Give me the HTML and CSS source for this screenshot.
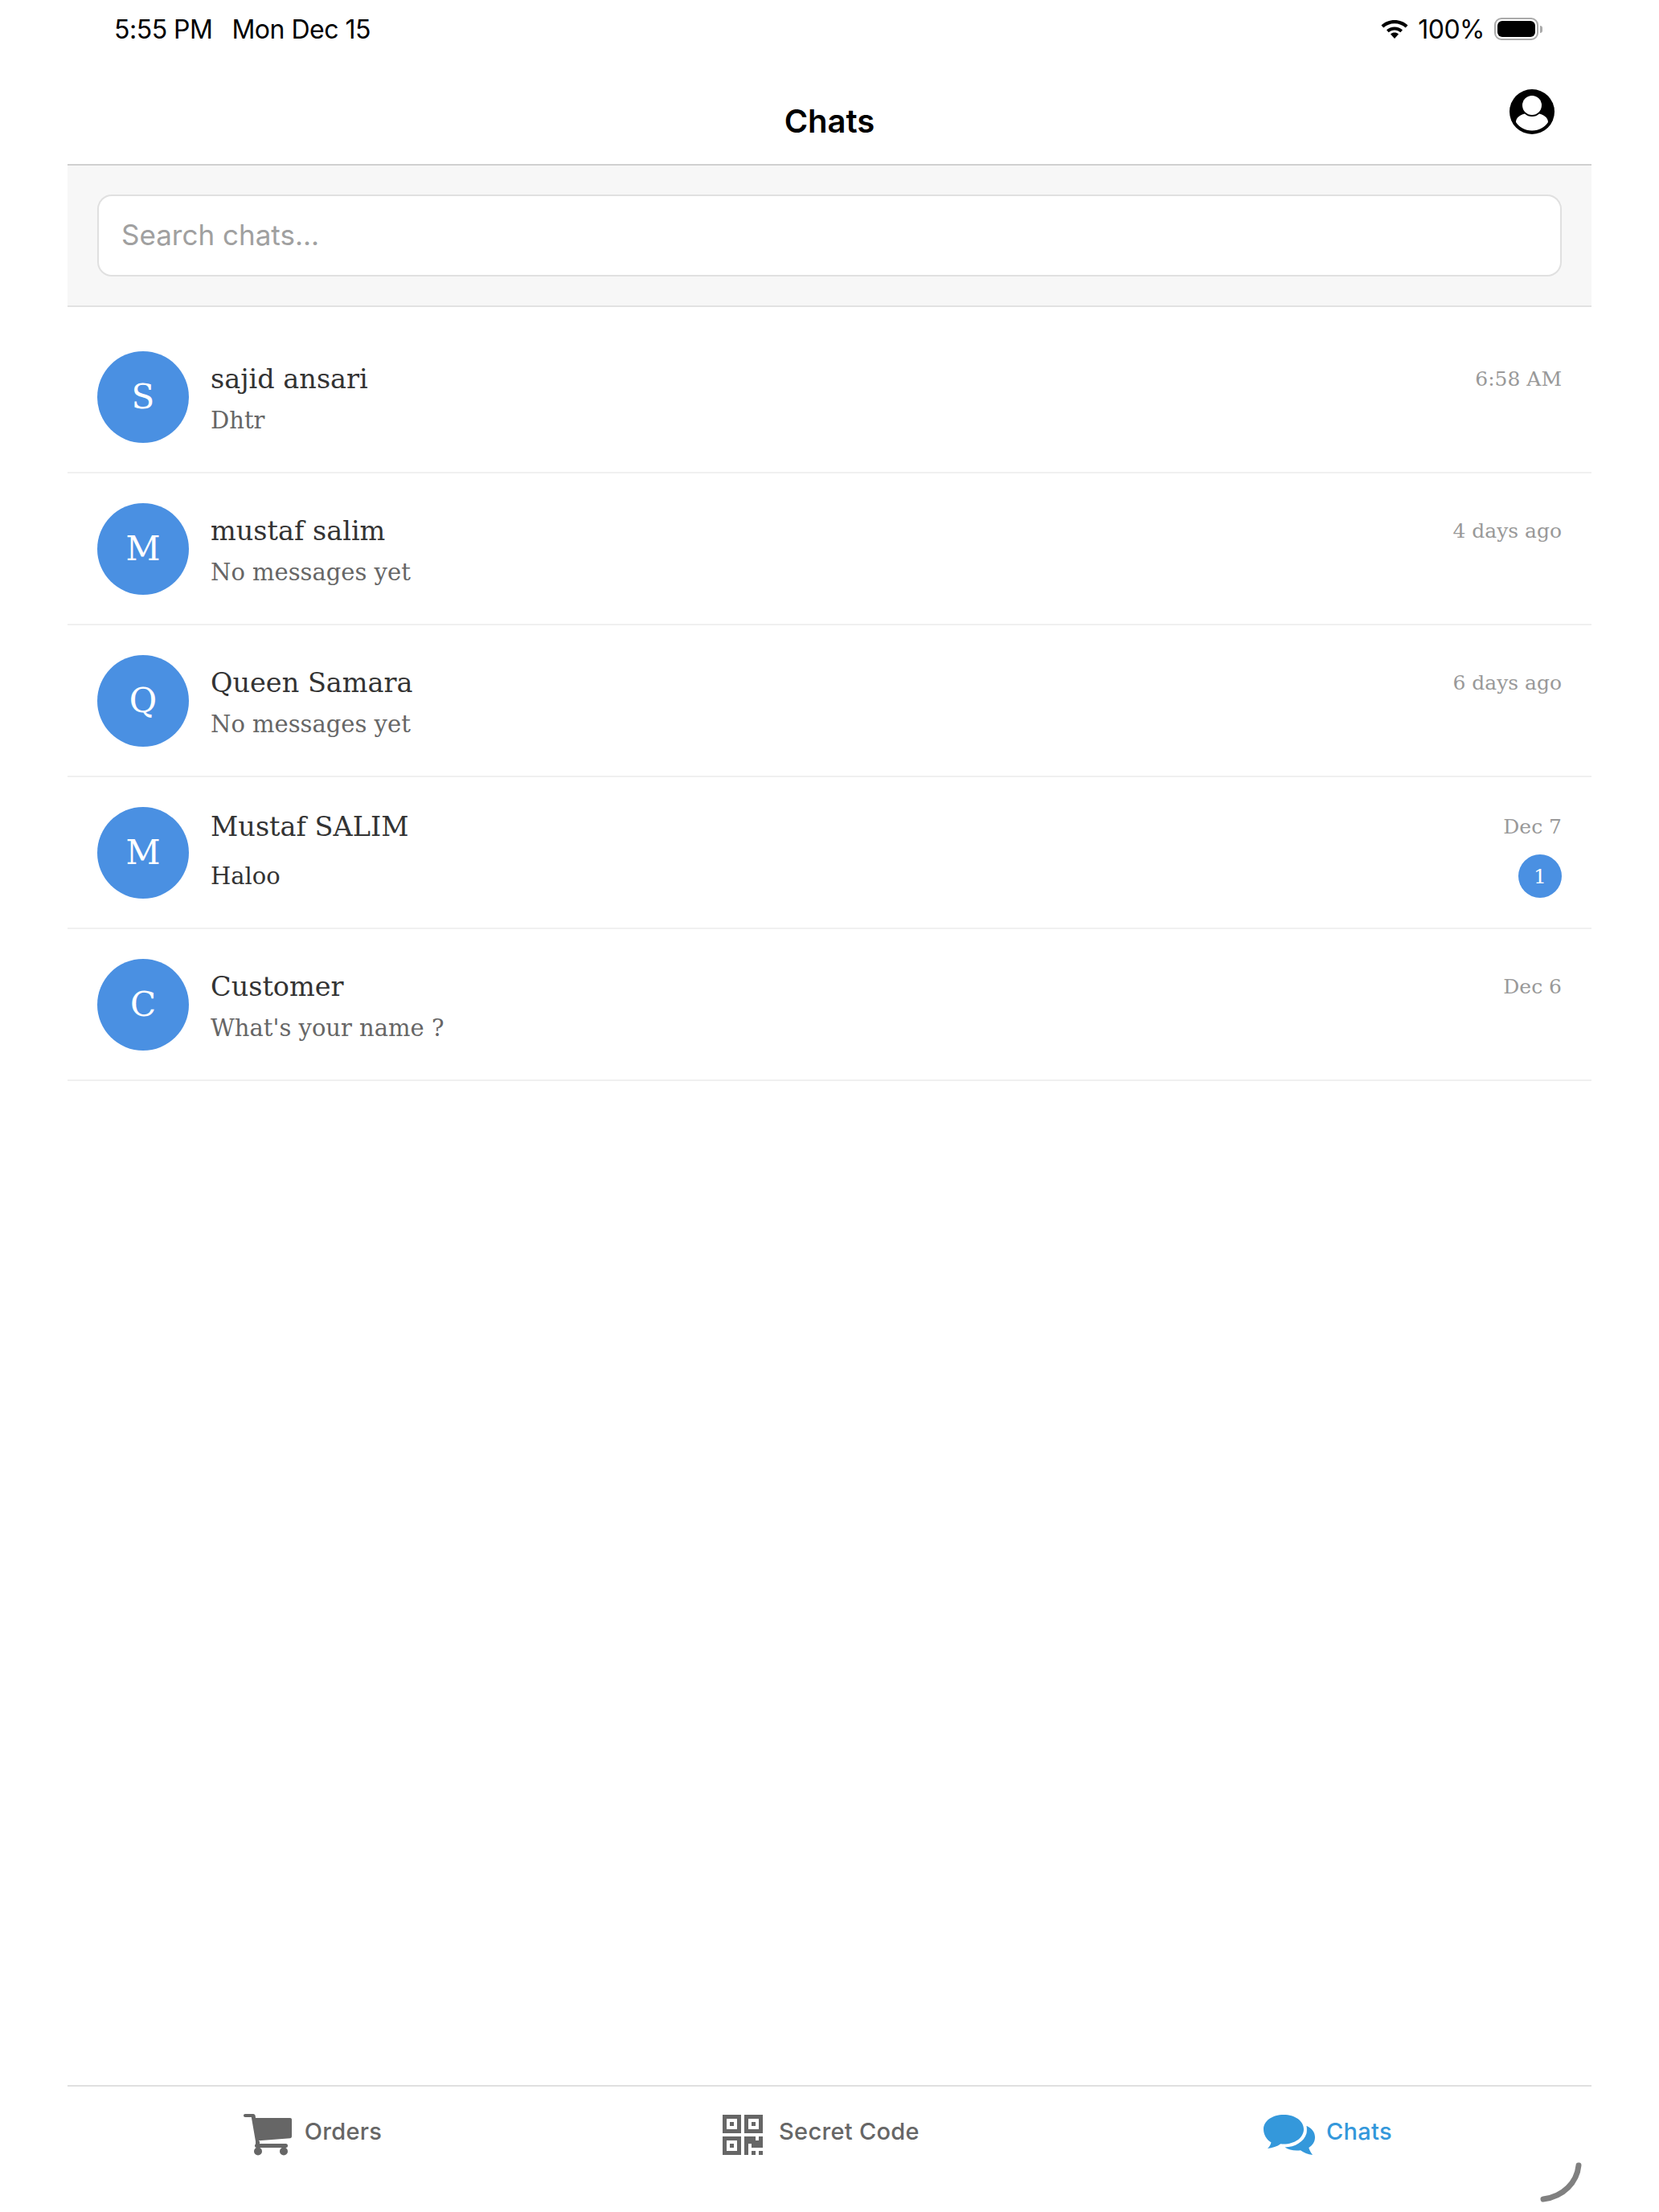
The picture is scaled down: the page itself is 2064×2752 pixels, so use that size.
FILE: index.html
```html
<!DOCTYPE html>
<html lang="en">
<head>
    <meta charset="UTF-8">
    <meta name="viewport" content="width=device-width, initial-scale=1.0">
    <title>Chats</title>
    <link rel="stylesheet" href="styles.css">
</head>
<body>
    <div class="status-bar">
        <div class="status-left">
            <span>5:55 PM</span>
            <span>Mon Dec 15</span>
        </div>
        <div class="status-right">
            <svg class="wifi" viewBox="0 0 34 24" width="34" height="24">
                <path d="M17 24l-5-5.6c2.8-2.4 7.2-2.4 10 0z" fill="#000"/>
                <path d="M17 9.5c-3.9 0-7.4 1.4-10 3.8l2.6 2.9c2-1.7 4.600-2.800 7.400-2.800s5.400 1.100 7.400 2.800l2.600-2.900c-2.600-2.400-6.100-3.800-10-3.800z" fill="#000"/>
                <path d="M17 1C10.600 1 4.800 3.400.500 7.400l2.800 3.100C6.900 7.200 11.700 5.200 17 5.200s10.100 2 13.700 5.300l2.800-3.100C29.200 3.400 23.400 1 17 1z" fill="#000"/>
            </svg>
            <span>100%</span>
            <div class="battery">
                <div class="battery-body"><div class="battery-fill"></div></div>
                <div class="battery-tip"></div>
            </div>
        </div>
    </div>

    <div class="app">
        <div class="nav-bar">
            <h1 class="nav-title">Chats</h1>
            <svg class="profile" viewBox="0 0 56 56" width="56" height="56">
                <circle cx="28" cy="28" r="28" fill="#000"/>
                <circle cx="28" cy="20" r="12" fill="#fff"/>
                <path d="M8 41c0-6 6-9.500 11-10.500 2.500 2.500 5.500 3.500 9 3.500s6.500-1 9-3.500c5 1 11 4.500 11 10.500-4 6-11 10.500-20 10.500S12 47 8 41z" fill="#fff"/>
            </svg>
        </div>

        <div class="search-bar">
            <input class="search-input" type="text" placeholder="Search chats...">
        </div>

        <div class="chat-list">
            <div class="chat-row">
                <div class="avatar">S</div>
                <div class="chat-body">
                    <div class="chat-top">
                        <span class="chat-name">sajid ansari</span>
                        <span class="chat-time">6:58 AM</span>
                    </div>
                    <div class="chat-bottom">
                        <span class="chat-msg">Dhtr</span>
                    </div>
                </div>
            </div>
            <div class="chat-row">
                <div class="avatar">M</div>
                <div class="chat-body">
                    <div class="chat-top">
                        <span class="chat-name">mustaf salim</span>
                        <span class="chat-time">4 days ago</span>
                    </div>
                    <div class="chat-bottom">
                        <span class="chat-msg">No messages yet</span>
                    </div>
                </div>
            </div>
            <div class="chat-row">
                <div class="avatar">Q</div>
                <div class="chat-body">
                    <div class="chat-top">
                        <span class="chat-name">Queen Samara</span>
                        <span class="chat-time">6 days ago</span>
                    </div>
                    <div class="chat-bottom">
                        <span class="chat-msg">No messages yet</span>
                    </div>
                </div>
            </div>
            <div class="chat-row">
                <div class="avatar">M</div>
                <div class="chat-body">
                    <div class="chat-top">
                        <span class="chat-name">Mustaf SALIM</span>
                        <span class="chat-time">Dec 7</span>
                    </div>
                    <div class="chat-bottom">
                        <span class="chat-msg unread">Haloo</span>
                        <span class="badge">1</span>
                    </div>
                </div>
            </div>
            <div class="chat-row">
                <div class="avatar">C</div>
                <div class="chat-body">
                    <div class="chat-top">
                        <span class="chat-name">Customer</span>
                        <span class="chat-time">Dec 6</span>
                    </div>
                    <div class="chat-bottom">
                        <span class="chat-msg">What's your name ?</span>
                    </div>
                </div>
            </div>
        </div>

        <div class="tab-bar">
            <div class="tab">
                <svg class="icon-cart" viewBox="0 0 60 52" width="60" height="52">
                    <path d="M2 0h10c1.500 0 2.500 1 2.700 2.500L15 5h43c1.200 0 2 .8 2 2v21c0 1.200-.8 2-2 2.200l-39 3 .6 3.800H15.500L9.800 4H2C.8 4 0 3.200 0 2S.8 0 2 0z" fill="#666"/>
                    <rect x="14" y="37" width="41" height="5" rx="2.500" fill="#666"/>
                    <rect x="15" y="34" width="5" height="6" fill="#666"/>
                    <circle cx="18" cy="46.500" r="5" fill="#666"/>
                    <circle cx="50" cy="46.500" r="5" fill="#666"/>
                </svg>
                <span>Orders</span>
            </div>
            <div class="tab">
                <svg class="icon-qr" viewBox="0 0 50 50" width="50" height="50">
                    <path fill-rule="evenodd" d="M0 0h23v23H0zM5 5v13h13V5zM27 0h23v23H27zM32 5v13h13V5zM0 27h23v23H0zM5 32v13h13V32z" fill="#666"/>
                    <rect x="9" y="9" width="5" height="5" fill="#666"/>
                    <rect x="36" y="9" width="5" height="5" fill="#666"/>
                    <rect x="9" y="36" width="5" height="5" fill="#666"/>
                    <path d="M27 27h14v5h4v-5h5v14H36v-5h-4v14h-5z" fill="#666"/>
                    <rect x="36" y="45" width="5" height="5" fill="#666"/>
                    <rect x="45" y="45" width="5" height="5" fill="#666"/>
                </svg>
                <span>Secret Code</span>
            </div>
            <div class="tab active">
                <svg class="icon-chat" viewBox="0 0 64 51" width="64" height="51">
                    <path d="M25 0c14 0 25 7.500 25 18s-11 18.500-25 18.500c-1.300 0-2.500-.1-3.700-.2C17 39.500 11 41.500 5 42c2-2 3.700-4.500 4.500-7.500C3.800 31 0 25 0 18 0 7.500 11 0 25 0z" fill="#3498db"/>
                    <path d="M54 14c6 3 10 7.500 10 14 0 5.500-3 10-7.700 13 .8 3 2.500 6 4.700 9-6-.6-11-3-15-5.800-1.500.2-3 .3-4.500.3-6 0-11-1.500-15-4 13-.2 24-7 27-17.500.5-2.900.5-6 .0-9z" fill="#3498db"/>
                </svg>
                <span>Chats</span>
            </div>
        </div>
    </div>

    <svg class="spinner" viewBox="0 0 54 52" width="54" height="52">
        <path d="M49 5C47 26 30 44 5 47" fill="none" stroke="#808080" stroke-width="7" stroke-linecap="round"/>
    </svg>
</body>
</html>
```

FILE: styles.css
```css
html, body {
    height: 100%;
}
body {
    margin: 0;
    background: #fff;
    font-family: Inter, 'Liberation Sans', sans-serif;
    display: flex;
    flex-direction: column;
    overflow: hidden;
}
.status-bar {
    height: 72px;
    padding: 0 142px;
    flex-shrink: 0;
    display: flex;
    justify-content: space-between;
    align-items: center;
    font-size: 32px;
    letter-spacing: -0.5px;
    color: #000;
}
.status-left {
    display: flex;
    gap: 24px;
}
.status-right {
    display: flex;
    align-items: center;
    gap: 12px;
    position: relative;
    left: -3px;
}
.wifi {
    display: block;
}
.battery {
    display: flex;
    align-items: center;
    gap: 2px;
}
.battery-body {
    width: 55px;
    height: 28px;
    box-sizing: border-box;
    border: 2px solid #aaa;
    border-radius: 9px;
    padding: 2px;
}
.battery-fill {
    height: 100%;
    background: #000;
    border-radius: 6px;
}
.battery-tip {
    width: 3px;
    height: 9px;
    background: #aaa;
    border-radius: 0 3px 3px 0;
}

.app {
    flex: 1;
    margin: 0 84px;
    display: flex;
    flex-direction: column;
    min-height: 0;
}
.nav-bar {
    height: 132px;
    border-bottom: 2px solid #d0d0d0;
    display: flex;
    align-items: center;
    justify-content: center;
    position: relative;
    flex-shrink: 0;
}
.nav-title {
    margin: 0;
    font-size: 40px;
    font-weight: 600;
    color: #000;
    position: relative;
    top: 12px;
}
.profile {
    position: absolute;
    right: 46px;
    top: 39px;
}
.search-bar {
    padding: 36px 37px;
    background: #f7f7f7;
    border-bottom: 2px solid #e2e2e2;
    flex-shrink: 0;
}
.search-input {
    display: block;
    width: 100%;
    height: 102px;
    box-sizing: border-box;
    padding: 0 28px 3px;
    border: 2px solid #e0e0e0;
    border-radius: 18px;
    background: #fff;
    font-family: inherit;
    font-size: 35px;
}
.search-input::placeholder {
    color: #a0a0a0;
    opacity: 1;
}

.chat-list {
    flex: 1;
    padding-top: 18px;
}
.chat-row {
    height: 189px;
    box-sizing: border-box;
    padding: 0 37px;
    border-bottom: 2px solid #f0f0f0;
    display: flex;
    align-items: center;
    gap: 27px;
}
.avatar {
    width: 114px;
    height: 114px;
    border-radius: 50%;
    background: #4a90e2;
    color: #fff;
    flex-shrink: 0;
    display: flex;
    align-items: center;
    justify-content: center;
    font-family: 'DejaVu Serif', 'Liberation Serif', serif;
    font-size: 42px;
}
.chat-body {
    flex: 1;
    font-family: 'DejaVu Serif', 'Liberation Serif', serif;
}
.chat-top {
    height: 48px;
    margin-bottom: 11px;
    display: flex;
    justify-content: space-between;
    align-items: center;
}
.chat-bottom {
    min-height: 34px;
    display: flex;
    justify-content: space-between;
    align-items: center;
}
.chat-name {
    font-size: 33.5px;
    color: #333;
}
.chat-time {
    font-size: 25px;
    color: #999;
}
.chat-msg {
    font-size: 29px;
    color: #666;
}
.chat-msg.unread {
    color: #333;
}
.badge {
    width: 54px;
    height: 54px;
    border-radius: 50%;
    background: #4a90e2;
    color: #fff;
    font-size: 25px;
    display: flex;
    align-items: center;
    justify-content: center;
}

.tab-bar {
    height: 156px;
    border-top: 2px solid #e0e0e0;
    flex-shrink: 0;
    display: flex;
}
.tab {
    flex: 1;
    display: flex;
    justify-content: center;
    align-items: center;
    gap: 16px;
    padding: 0 24px 36px 0;
    color: #666;
    font-size: 29px;
    font-weight: 500;
    letter-spacing: 0.3px;
}
.tab span {
    margin-bottom: 10px;
}
.tab.active {
    color: #3498db;
}
.icon-cart {
    margin-left: 2px;
}
.icon-qr {
    margin-left: 3px;
    margin-right: 4px;
}
.icon-chat {
    margin-right: -2px;
}
.spinner {
    position: absolute;
    right: 95px;
    bottom: 11px;
}
```
